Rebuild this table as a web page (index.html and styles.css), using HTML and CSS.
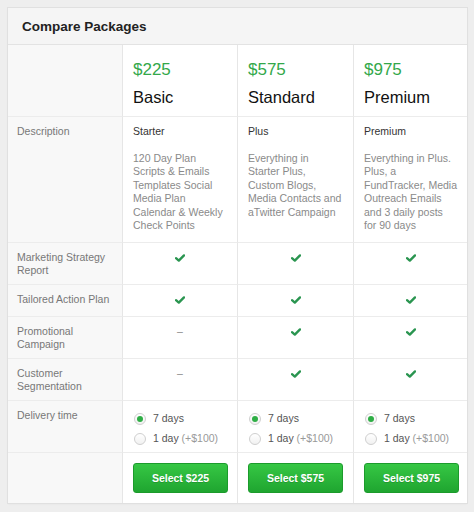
FILE: index.html
```html
<!DOCTYPE html>
<html>
<head>
<meta charset="utf-8">
<link rel="stylesheet" href="styles.css">
</head>
<body>
<div class="panel">
  <div class="panel-head">Compare Packages</div>
  <div class="grid">
    <div class="cell label"></div>
    <div class="cell plan"><div class="price">$225</div><div class="name">Basic</div></div>
    <div class="cell plan"><div class="price">$575</div><div class="name">Standard</div></div>
    <div class="cell plan last"><div class="price">$975</div><div class="name">Premium</div></div>

    <div class="cell label">Description</div>
    <div class="cell desc"><div class="tier">Starter</div><div class="text">120 Day Plan Scripts &amp; Emails Templates Social Media Plan Calendar &amp; Weekly Check Points</div></div>
    <div class="cell desc"><div class="tier">Plus</div><div class="text">Everything in Starter Plus, Custom Blogs, Media Contacts and aTwitter Campaign</div></div>
    <div class="cell desc last"><div class="tier">Premium</div><div class="text">Everything in Plus. Plus, a FundTracker, Media Outreach Emails and 3 daily posts for 90 days</div></div>

    <div class="cell label">Marketing Strategy Report</div>
    <div class="cell mark"><svg class="check" viewBox="0 0 10 8"><path d="M1 4.2 L3.8 6.6 L9 1.4"/></svg></div>
    <div class="cell mark"><svg class="check" viewBox="0 0 10 8"><path d="M1 4.2 L3.8 6.6 L9 1.4"/></svg></div>
    <div class="cell mark last"><svg class="check" viewBox="0 0 10 8"><path d="M1 4.2 L3.8 6.6 L9 1.4"/></svg></div>

    <div class="cell label">Tailored Action Plan</div>
    <div class="cell mark"><svg class="check" viewBox="0 0 10 8"><path d="M1 4.2 L3.8 6.6 L9 1.4"/></svg></div>
    <div class="cell mark"><svg class="check" viewBox="0 0 10 8"><path d="M1 4.2 L3.8 6.6 L9 1.4"/></svg></div>
    <div class="cell mark last"><svg class="check" viewBox="0 0 10 8"><path d="M1 4.2 L3.8 6.6 L9 1.4"/></svg></div>

    <div class="cell label">Promotional Campaign</div>
    <div class="cell mark"><span class="dash">–</span></div>
    <div class="cell mark"><svg class="check" viewBox="0 0 10 8"><path d="M1 4.2 L3.8 6.6 L9 1.4"/></svg></div>
    <div class="cell mark last"><svg class="check" viewBox="0 0 10 8"><path d="M1 4.2 L3.8 6.6 L9 1.4"/></svg></div>

    <div class="cell label">Customer Segmentation</div>
    <div class="cell mark"><span class="dash">–</span></div>
    <div class="cell mark"><svg class="check" viewBox="0 0 10 8"><path d="M1 4.2 L3.8 6.6 L9 1.4"/></svg></div>
    <div class="cell mark last"><svg class="check" viewBox="0 0 10 8"><path d="M1 4.2 L3.8 6.6 L9 1.4"/></svg></div>

    <div class="cell label">Delivery time</div>
    <div class="cell delivery">
      <div class="opt"><span class="radio on"></span><span class="opt-text">7 days</span></div>
      <div class="opt"><span class="radio"></span><span class="opt-text">1 day <span class="extra">(+$100)</span></span></div>
    </div>
    <div class="cell delivery">
      <div class="opt"><span class="radio on"></span><span class="opt-text">7 days</span></div>
      <div class="opt"><span class="radio"></span><span class="opt-text">1 day <span class="extra">(+$100)</span></span></div>
    </div>
    <div class="cell delivery last">
      <div class="opt"><span class="radio on"></span><span class="opt-text">7 days</span></div>
      <div class="opt"><span class="radio"></span><span class="opt-text">1 day <span class="extra">(+$100)</span></span></div>
    </div>

    <div class="cell label bottom"></div>
    <div class="cell action bottom"><button class="btn">Select $225</button></div>
    <div class="cell action bottom"><button class="btn">Select $575</button></div>
    <div class="cell action bottom last"><button class="btn">Select $975</button></div>
  </div>
</div>
</body>
</html>
```

FILE: styles.css
```css
html, body {
  margin: 0;
  padding: 0;
}
body {
  background: #eeeeee;
  padding: 8px;
  font-family: "Liberation Sans", Arial, sans-serif;
}
.panel {
  width: 459px;
  background: #ffffff;
  box-shadow: 0 0 0 1px #e0e0e0, 0 1px 2px rgba(0,0,0,0.06);
}
.panel-head {
  box-sizing: border-box;
  height: 37px;
  padding: 0 14px;
  display: flex;
  align-items: center;
  background: #f5f5f5;
  border-bottom: 1px solid #e3e3e3;
  font-size: 13.5px;
  font-weight: bold;
  color: #222;
}
.grid {
  display: grid;
  grid-template-columns: 115px 115px 116px 113px;
  grid-template-rows: 72px 126px 42px 32px 42px 42px 52px 50px;
}
.cell {
  box-sizing: border-box;
  border-right: 1px solid #e6e6e6;
  border-bottom: 1px solid #ececec;
  padding: 8px 10px 0 10px;
  font-size: 10.5px;
  line-height: 13.4px;
}
.cell.last {
  border-right: none;
}
.cell.bottom {
  border-bottom: none;
}
.label {
  background: #f8f8f8;
  color: #777;
  padding-left: 9px;
  padding-right: 8px;
}
.plan {
  padding-top: 14px;
}
.price {
  font-size: 17px;
  line-height: 22px;
  color: #33a84a;
}
.name {
  font-size: 16.5px;
  line-height: 22px;
  margin-top: 5px;
  color: #111;
}
.tier {
  color: #333;
}
.text {
  margin-top: 13.6px;
  color: #8a8a8a;
}
.mark {
  display: flex;
  justify-content: center;
  align-items: flex-start;
}
.check {
  width: 10px;
  height: 8px;
  margin-top: 3px;
}
.check path {
  fill: none;
  stroke: #2a9550;
  stroke-width: 2.4;
  stroke-linecap: round;
  stroke-linejoin: round;
}
.dash {
  color: #888;
  line-height: 13.4px;
}
.delivery {
  padding-top: 11px;
  display: flex;
  flex-direction: column;
  gap: 7px;
}
.opt {
  display: flex;
  align-items: center;
  gap: 7px;
  height: 13px;
  padding-left: 1px;
}
.radio {
  box-sizing: border-box;
  width: 12px;
  height: 12px;
  border-radius: 50%;
  border: 1px solid #cfcfcf;
  background: linear-gradient(#ffffff, #f1f1f1);
  display: flex;
  align-items: center;
  justify-content: center;
  flex: none;
}
.radio.on::after {
  content: "";
  width: 6px;
  height: 6px;
  border-radius: 50%;
  background: #2eae45;
}
.opt-text {
  color: #555;
}
.extra {
  color: #999;
}
.action {
  padding-top: 10px;
}
.btn {
  box-sizing: border-box;
  width: 95px;
  height: 30px;
  border: 1px solid #1c9b2c;
  border-radius: 3px;
  background: linear-gradient(#36c744, #1fa530);
  color: #ffffff;
  font-family: "Liberation Sans", Arial, sans-serif;
  font-size: 10.5px;
  font-weight: bold;
  text-shadow: 0 1px 0 rgba(0,0,0,0.15);
  padding: 0;
  cursor: pointer;
}
```
